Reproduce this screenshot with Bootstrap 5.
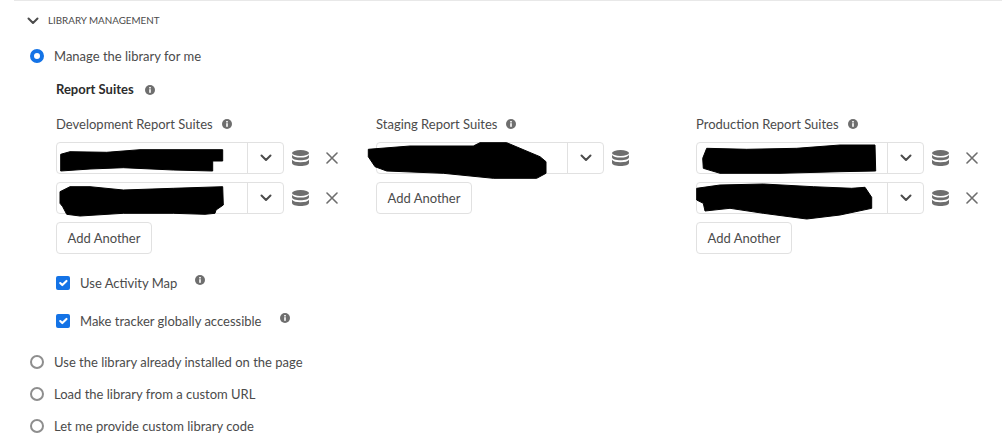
<!DOCTYPE html>
<html lang="en">
<head>
  <meta charset="UTF-8" />
  <title>Library Management</title>
  <link href="https://cdn.jsdelivr.net/npm/bootstrap@5.3.3/dist/css/bootstrap.min.css" rel="stylesheet" />
  <style>
    body { font-family: Lato, "Noto Sans", "Liberation Sans", sans-serif; font-size: 13px; color: #4b4b4b; background: #fff; overflow: hidden; }
    label, .suite-label span { padding-top: 2px; margin-bottom: 0; }
    .page { height: 442px; border-top: 1px solid #e8e8e8; margin-left: 14px; padding-left: 16px; }
    .sect-head { height: 39px; gap: 9px; margin-left: -3px; }
    .sect-title { font-size: 9.8px; text-transform: uppercase; color: #4b4b4b; }
    .radio-row { height: 32px; gap: 10px; }
    .form-check-input.opt-radio { width: 14px; height: 14px; margin: 0; background-image: none; background-color: #fff; border: 2px solid #8e8e8e; flex: none; }
    .form-check-input.opt-radio:checked { border: 4px solid #1473e6; background-color: #fff; background-image: none; }
    .form-check-input.opt-check { width: 14px; height: 14px; margin: 0; border-radius: 2px; border: 0; background-color: #1473e6; flex: none; }
    .suites { padding-left: 26px; }
    .suites-title { height: 34px; padding-top: 1px; font-weight: 700; color: #2c2c2c; gap: 11px; }
    .suite-col { width: 320px; flex: none; }
    .suite-label { height: 35px; gap: 9px; margin-bottom: 1px; }
    .combo { position: relative; width: 228px; height: 32px; border: 1px solid #e1e1e1; border-radius: 4px; background: #fff; flex: none; }
    .combo-text { flex: 1; }
    .combo-btn { width: 36px; height: 100%; border-left: 1px solid #e1e1e1; }
    .scribble { position: absolute; left: -1px; top: -1px; overflow: visible; }
    .suite-row { height: 32px; margin-bottom: 8px; }
    .db-btn { width: 17px; margin-left: 8px; }
    .x-btn { width: 12px; margin-left: 17px; }
    .add-btn { width: 96px; height: 32px; padding: 1px 0 0; font-size: 13px; color: #4b4b4b; background: #fff; border: 1px solid #e1e1e1; border-radius: 4px; }
    .check-row { gap: 10px; }
    .check-first { height: 38px; margin-top: 10px; }
    .check-second { height: 38px; margin-bottom: 6px; }
    .hint-far { margin-left: 8px; margin-top: -6px; }
    .info-ico { flex: none; }
  </style>
</head>
<body>
  <svg width="0" height="0" class="d-block">
    <defs>
      <symbol id="ico-info" viewBox="0 0 10 10"><circle cx="5" cy="5" r="5" fill="#6e6e6e"/><rect x="4.2" y="4.2" width="1.6" height="3.6" fill="#fff"/><rect x="4.2" y="2" width="1.6" height="1.5" fill="#fff"/></symbol>
      <symbol id="ico-chev" viewBox="0 0 12 8"><path d="M1.5 1.5 6 6l4.5-4.5" fill="none" stroke="#4b4b4b" stroke-width="2" stroke-linecap="round" stroke-linejoin="round"/></symbol>
      <symbol id="ico-db" viewBox="0 0 17 16"><ellipse cx="8.5" cy="3" rx="8.5" ry="3" fill="#6e6e6e"/><path d="M0 5v2.2c0 1.7 3.8 3 8.5 3s8.5-1.3 8.5-3V5c-1 1.7-4.4 2.6-8.5 2.6S1 6.700 0 5z" fill="#6e6e6e"/><path d="M0 9.800V13c0 1.700 3.800 3 8.500 3s8.500-1.300 8.500-3V9.800c-1 1.700-4.400 2.500-8.500 2.500S1 11.500 0 9.800z" fill="#6e6e6e"/></symbol>
      <symbol id="ico-x" viewBox="0 0 12 12"><path d="M1 1l10 10M11 1 1 11" fill="none" stroke="#6e6e6e" stroke-width="1.600" stroke-linecap="round"/></symbol>
    </defs>
  </svg>
  <div class="page">
    <div class="sect-head d-flex align-items-center">
      <svg width="12" height="8"><use href="#ico-chev"/></svg>
      <span class="sect-title">Library Management</span>
    </div>

    <div class="radio-row d-flex align-items-center">
      <input class="form-check-input opt-radio" type="radio" name="lib" id="lib1" checked />
      <label for="lib1">Manage the library for me</label>
    </div>

    <div class="suites">
      <div class="suites-title d-flex align-items-center">
        <span>Report Suites</span>
        <svg class="info-ico" width="10" height="10"><use href="#ico-info"/></svg>
      </div>

      <div class="d-flex">
        <div class="suite-col">
          <div class="suite-label d-flex align-items-center">
            <span>Development Report Suites</span>
            <svg class="info-ico" width="10" height="10"><use href="#ico-info"/></svg>
          </div>
          <div class="suite-row d-flex align-items-center">
            <div class="combo d-flex align-items-center">
              <div class="combo-text"></div>
              <div class="combo-btn d-flex align-items-center justify-content-center"><svg width="12" height="8"><use href="#ico-chev"/></svg></div>
              <svg class="scribble" width="228" height="32"><path d="M4.700 12.300 14 9.700l36.700.6L84 7.700h82.700V19h-10v10l-39.400-1-50-2.300L34 27l-29.300 2z" stroke="#000" stroke-width="1" stroke-linejoin="round"/></svg>
            </div>
            <svg class="db-btn" width="17" height="16"><use href="#ico-db"/></svg>
            <svg class="x-btn" width="12" height="12"><use href="#ico-x"/></svg>
          </div>
          <div class="suite-row d-flex align-items-center">
            <div class="combo d-flex align-items-center">
              <div class="combo-text"></div>
              <div class="combo-btn d-flex align-items-center justify-content-center"><svg width="12" height="8"><use href="#ico-chev"/></svg></div>
              <svg class="scribble" width="228" height="32"><path d="M4 9.700 14 4.700h20l33.300 3.300 50-1.700 49.400-1.600.6 18.300-7.300 5-1 3.300-10 1-31.700-1-50 0L24 34l-13.300-1.700-4-7.600L4 21.300z" stroke="#000" stroke-width="1" stroke-linejoin="round"/></svg>
            </div>
            <svg class="db-btn" width="17" height="16"><use href="#ico-db"/></svg>
            <svg class="x-btn" width="12" height="12"><use href="#ico-x"/></svg>
          </div>
          <button type="button" class="btn add-btn">Add Another</button>
        </div>

        <div class="suite-col">
          <div class="suite-label d-flex align-items-center">
            <span>Staging Report Suites</span>
            <svg class="info-ico" width="10" height="10"><use href="#ico-info"/></svg>
          </div>
          <div class="suite-row d-flex align-items-center">
            <div class="combo d-flex align-items-center">
              <div class="combo-text"></div>
              <div class="combo-btn d-flex align-items-center justify-content-center"><svg width="12" height="8"><use href="#ico-chev"/></svg></div>
              <svg class="scribble" width="228" height="32"><path d="M-7.700 7.300 34 4h63.300l6.700-3.300h26.700l33.300 14 6 5v11.600l-9.300 5h-43.400l-50-5-56.600-2.300-11.700-4.300-6.700-10z" stroke="#000" stroke-width="1" stroke-linejoin="round"/></svg>
            </div>
            <svg class="db-btn" width="17" height="16"><use href="#ico-db"/></svg>
          </div>
          <button type="button" class="btn add-btn">Add Another</button>
        </div>

        <div class="suite-col">
          <div class="suite-label d-flex align-items-center">
            <span>Production Report Suites</span>
            <svg class="info-ico" width="10" height="10"><use href="#ico-info"/></svg>
          </div>
          <div class="suite-row d-flex align-items-center">
            <div class="combo d-flex align-items-center">
              <div class="combo-text"></div>
              <div class="combo-btn d-flex align-items-center justify-content-center"><svg width="12" height="8"><use href="#ico-chev"/></svg></div>
              <svg class="scribble" width="228" height="32"><path d="M10.700 6.300l40 1 50-1L144 3h35l.7 26-35.700.7-60 1.600H24l-16.700-5-.6-10z" stroke="#000" stroke-width="1" stroke-linejoin="round"/></svg>
            </div>
            <svg class="db-btn" width="17" height="16"><use href="#ico-db"/></svg>
            <svg class="x-btn" width="12" height="12"><use href="#ico-x"/></svg>
          </div>
          <div class="suite-row d-flex align-items-center">
            <div class="combo d-flex align-items-center">
              <div class="combo-text"></div>
              <div class="combo-btn d-flex align-items-center justify-content-center"><svg width="12" height="8"><use href="#ico-chev"/></svg></div>
              <svg class="scribble" width="228" height="32"><path d="M.7 6.300 24 3l43.300-1 50 2.700 38.400 1.600 13.300-1 6.700 10v11L144 33l-33.300 4-43.400-5.700-33.300-5L9 29l-1.700-7.700L.7 18z" stroke="#000" stroke-width="1" stroke-linejoin="round"/></svg>
            </div>
            <svg class="db-btn" width="17" height="16"><use href="#ico-db"/></svg>
            <svg class="x-btn" width="12" height="12"><use href="#ico-x"/></svg>
          </div>
          <button type="button" class="btn add-btn">Add Another</button>
        </div>
      </div>

      <div class="check-row check-first d-flex align-items-center">
        <input class="form-check-input opt-check" type="checkbox" id="chk1" checked />
        <label for="chk1">Use Activity Map</label>
        <svg class="info-ico hint-far" width="10" height="10"><use href="#ico-info"/></svg>
      </div>
      <div class="check-row check-second d-flex align-items-center">
        <input class="form-check-input opt-check" type="checkbox" id="chk2" checked />
        <label for="chk2">Make tracker globally accessible</label>
        <svg class="info-ico hint-far" width="10" height="10"><use href="#ico-info"/></svg>
      </div>
    </div>

    <div>
      <div class="radio-row d-flex align-items-center">
        <input class="form-check-input opt-radio" type="radio" name="lib" id="lib2" />
        <label for="lib2">Use the library already installed on the page</label>
      </div>
      <div class="radio-row d-flex align-items-center">
        <input class="form-check-input opt-radio" type="radio" name="lib" id="lib3" />
        <label for="lib3">Load the library from a custom URL</label>
      </div>
      <div class="radio-row d-flex align-items-center">
        <input class="form-check-input opt-radio" type="radio" name="lib" id="lib4" />
        <label for="lib4">Let me provide custom library code</label>
      </div>
    </div>
  </div>
  <script src="https://cdn.jsdelivr.net/npm/bootstrap@5.3.3/dist/js/bootstrap.bundle.min.js"></script>
</body>
</html>
